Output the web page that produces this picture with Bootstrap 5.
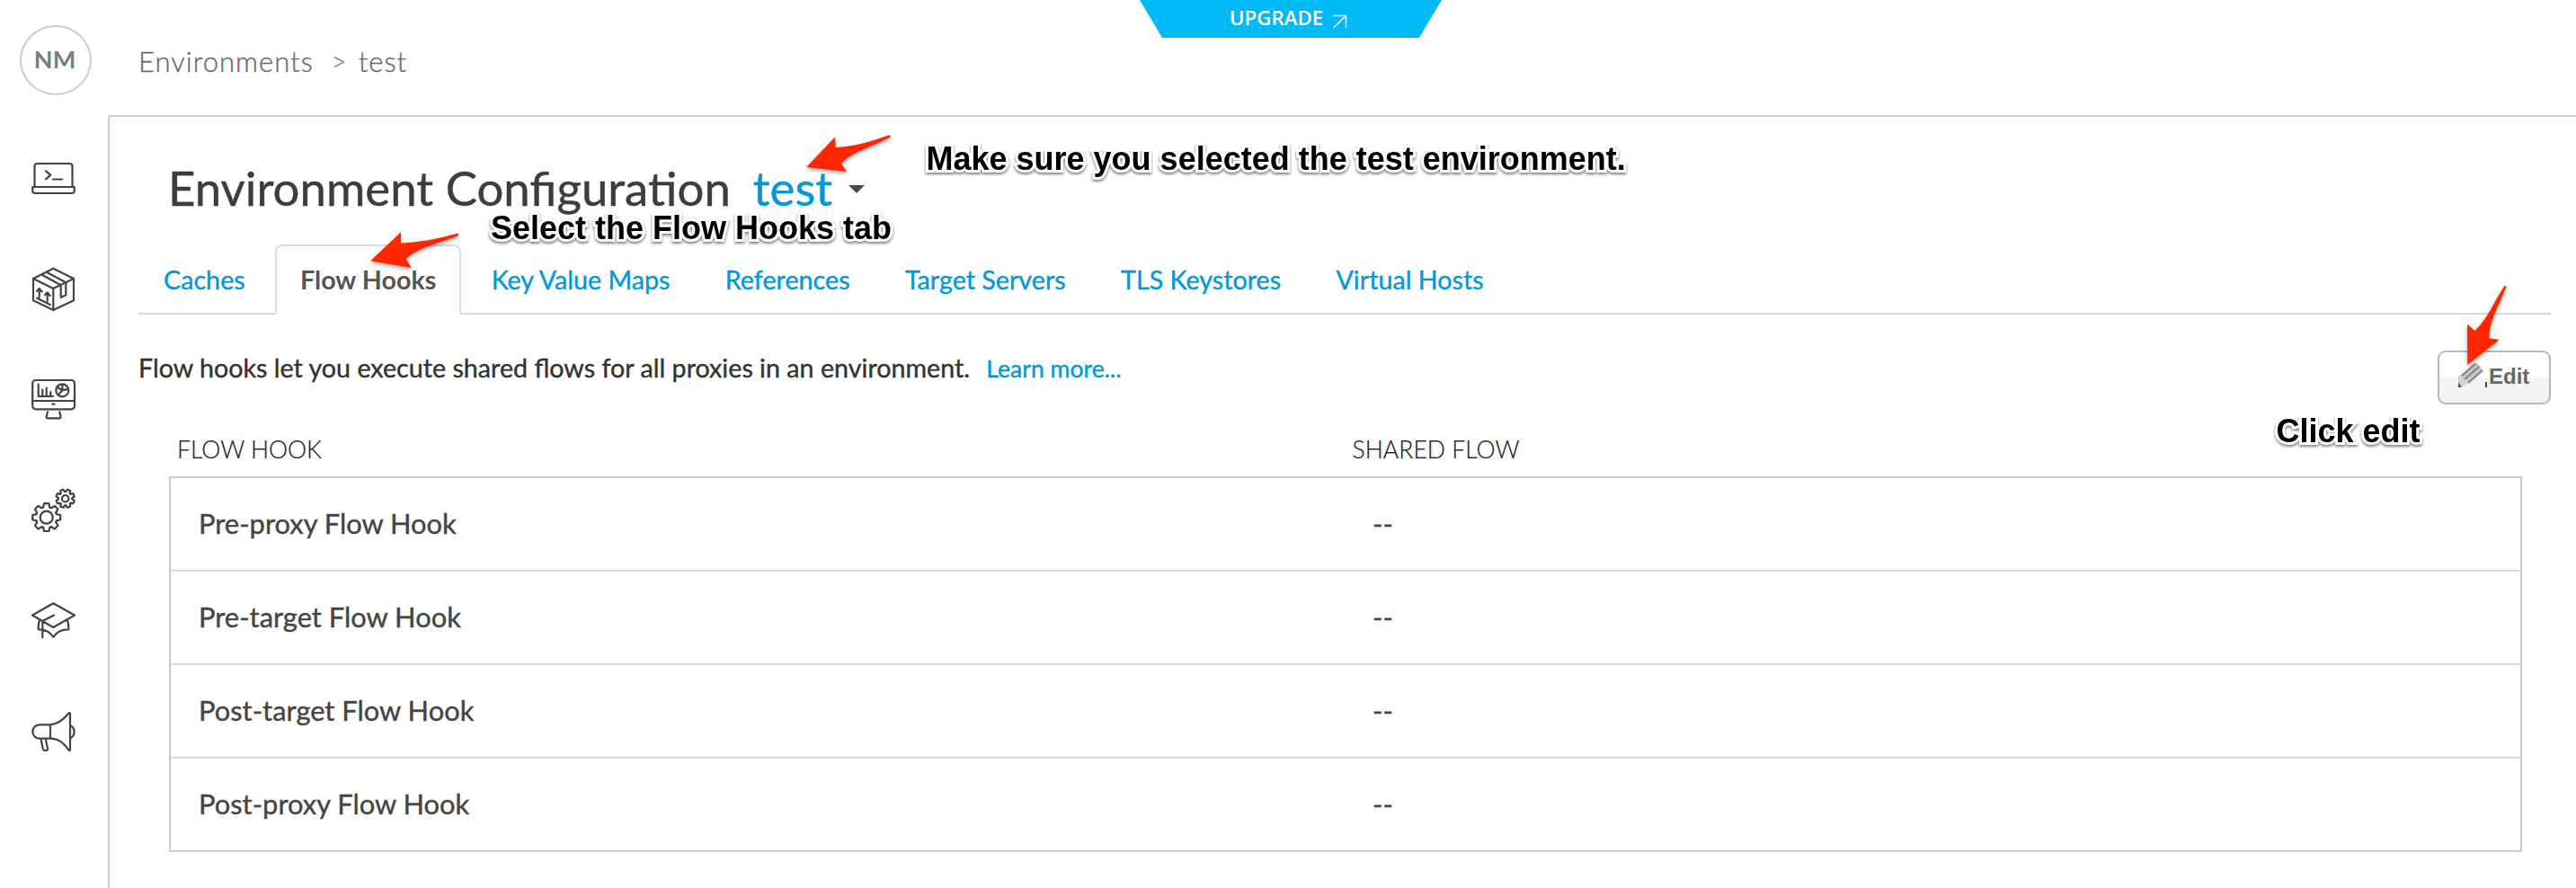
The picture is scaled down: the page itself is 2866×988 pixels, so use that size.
<!DOCTYPE html>
<html lang="en">
<head>
<meta charset="utf-8">
<title>Environment Configuration</title>
<link rel="stylesheet" href="https://cdn.jsdelivr.net/npm/bootstrap@5.3.0/dist/css/bootstrap.min.css">
<style>
body{font-family:Lato,"Liberation Sans",sans-serif;color:#333;background:#fff;width:2866px;height:988px}
a{color:#0199db;text-decoration:none}
.rail{width:120px}
.avatar{width:80px;height:78px;border:2px solid #ccc;border-radius:50%;margin:28px 0 0 22px;font-size:27px;color:#7b7d7d;padding-right:2px;padding-bottom:1px}
.rail-nav{margin-top:30px}
.rail-nav li{height:123px}
.rail svg{width:50px;height:50px;fill:none;stroke:#434444;stroke-width:2.2;stroke-linecap:round;stroke-linejoin:round}
.top{height:128px;padding:48px 0 0 34px;font-size:31px;line-height:40px;font-weight:300;letter-spacing:1px;color:#666868;-webkit-text-stroke:.3px}
.crumb-sep{font-size:29px;margin:0 12px 0 20px;color:#808282}
.pane{border:2px solid #ccc;border-right:0;border-bottom:0;border-top-left-radius:3px;padding:49px 28px 0 32px;-webkit-text-stroke:.4px}
.title{font-size:52.75px;line-height:60px;margin:0 0 33px 33px;font-weight:400;color:#3c3d3d;font-variant-ligatures:common-ligatures discretionary-ligatures}
.title a{margin-left:25px;font-variant-ligatures:none}
.caret{width:0;height:0;border:9px solid transparent;border-top-color:#4a4a4a;border-bottom:0;margin-left:18px;margin-top:2px}
.env-tabs{--bs-nav-tabs-border-width:2px;border-bottom:2px solid #dadada;font-size:28.7px;line-height:40px;gap:5.3px}
.env-tabs .nav-link{padding:17px 26px 17px;border:2px solid transparent;border-radius:8px 8px 0 0;color:#0199db;margin-bottom:-2px}
.env-tabs .nav-link.active{color:#555;font-weight:700;border-color:#dadada #dadada #fff;-webkit-text-stroke:0}
.intro{margin-top:40px;font-size:28.66px;line-height:38px}
.intro a{font-size:26.6px;margin-left:11px}
.edit{width:126px;height:60px;border:2px solid #b1bbbf;border-radius:9px;background:linear-gradient(#fff 50%,#f2f4f4 50%);font:bold 24px/50px "Liberation Sans",Arial,sans-serif;color:#666;padding:0 0 2px 20px;-webkit-text-stroke:0}
.edit:hover{color:#666}
.edit svg{margin-top:-2px}
.edit span{margin-left:2px}
.hooks{margin:35px 32px 0 34px}
.hooks-head{font-size:26.6px;line-height:30px;font-weight:300;padding-left:9px;margin-bottom:15px;color:#222;-webkit-text-stroke:.2px}
.hooks-head span:first-child{width:1307.5px}
.hooks-body{border:2px solid #ccc;border-bottom:0}
.hook{height:104px;border-bottom:2px solid #dadada;font-size:30.87px;padding:1px 0 0 31px;color:#444545}
.hook:last-child{border-bottom-color:#ccc}
.hook span:first-child{width:1306px}
.upgrade{left:1268px;top:0;width:336px;height:42px;background:#00b9f7;clip-path:polygon(0 0,100% 0,311px 100%,25px 100%);color:#fff;font:600 22.3px/40px "Open Sans",sans-serif;padding-left:100px}
.upgrade:hover{color:#fff}
.note{font:bold 36px/36px "Liberation Sans",Arial,sans-serif;color:#000;white-space:nowrap;paint-order:stroke fill;-webkit-text-stroke:6px #fff;filter:drop-shadow(0 2px 1.5px rgba(0,0,0,.5))}
.note-env{left:1030.5px;top:159px}
.note-tab{left:546px;top:235.5px}
.note-edit{left:2532.5px;top:462px}
.arrows{left:0;top:0;pointer-events:none;filter:drop-shadow(0 2px 2px rgba(0,0,0,.4))}
</style>
</head>
<body class="d-flex position-relative overflow-hidden">
<aside class="rail flex-shrink-0">
  <div class="avatar d-flex align-items-center justify-content-center fw-bold">NM</div>
  <ul class="rail-nav list-unstyled">
    <li class="d-flex align-items-center justify-content-center"><svg viewBox="0 0 50 50"><path d="M3.5 35V12a3 3 0 0 1 3-3h36a3 3 0 0 1 3 3v23M1.2 35h46.6v4a3 3 0 0 1-3 3H4.2a3 3 0 0 1-3-3zM16 17.3l5.3 4.4-5.3 4.6M24 26.5h10"/></svg></li>
    <li class="d-flex align-items-center justify-content-center"><svg viewBox="0 0 50 50"><path d="M24.3 2.7 47 14v24.3L24.3 49 2 38.3V14zM2 14l22.3 11L47 14M24.3 25v24M16.7 6.7l21.6 11.6v14l-5.6 2.6V21.3l-21-11.6M8.7 34.7V25M6 28l2.7-3 3 3.5M17.7 39v-9.7M15 32l2.7-2.7 3 3.7M6.3 35.7l14.4 7.3"/></svg></li>
    <li class="d-flex align-items-center justify-content-center"><svg viewBox="0 0 50 50"><rect x="1.2" y="4" width="46.8" height="32.3" rx="3.5"/><path d="M1.2 27H48M23.2 30.5h2.4M18 39.3 16.6 45q0 1.3 1.2 1.3h13.6q1.2 0 1.2-1.3l-1.3-5.7M7.7 8.7V22H24M12.3 14.5V22M16.7 12.7V22M21.3 17V22M34.3 15.3l-5.8-3.8M34.3 15.3l.2-6.5M34.3 15.3l6.6-1.4M34.3 15.3l-4.6 5.3"/><circle cx="34.3" cy="15.3" r="7"/></svg></li>
    <li class="d-flex align-items-center justify-content-center"><svg viewBox="0 0 50 50"><defs><path id="tooth" vector-effect="non-scaling-stroke" d="M-5.8-10.5Q-4-10.5-3.4-12L-2.6-15.5H2.6L3.4-12Q3.8-11 5-10.6"/><g id="gear"><use href="#tooth"/><use href="#tooth" transform="rotate(45)"/><use href="#tooth" transform="rotate(90)"/><use href="#tooth" transform="rotate(135)"/><use href="#tooth" transform="rotate(180)"/><use href="#tooth" transform="rotate(225)"/><use href="#tooth" transform="rotate(270)"/><use href="#tooth" transform="rotate(315)"/></g></defs><use href="#gear" transform="translate(16.7 33.7)"/><circle cx="16.7" cy="33.7" r="7"/><use href="#gear" transform="translate(37.7 12.7) rotate(22.5) scale(.66)"/><circle cx="37.7" cy="12.7" r="3.7"/></svg></li>
    <li class="d-flex align-items-center justify-content-center"><svg viewBox="0 0 50 50"><path d="M24.3 6.3 48 19.5 24.3 33 1 19.5zM25 19.5 12.3 26v18.3M9 25Q7.5 29 7.7 35.3Q19 35 24.3 43.8Q30 35 41.3 35.3Q41.5 29 39.8 25"/></svg></li>
    <li class="d-flex align-items-center justify-content-center"><svg viewBox="0 0 50 50"><path d="M21 18.3H9a7.7 7.7 0 0 0 0 15.4h12zC31 17.5 37 11 41 6q2-2 2 .5v39.5q0 2-1.7.3C35 37.5 30 34 21 33.7M43.3 19.2a8 8 0 0 1 0 14.2M10.5 34l2.3 11.5q.3 1.3 1.5 1.3h2.5q1.7 0 1.3-1.6L15.7 34"/></svg></li>
  </ul>
</aside>
<main class="flex-grow-1 d-flex flex-column">
  <header class="top d-flex"><span>Environments</span><span class="crumb-sep">&gt;</span><span>test</span></header>
  <section class="pane flex-grow-1">
    <h1 class="title d-flex align-items-center">Environment Configuration <a href="#">test</a><span class="caret"></span></h1>
    <ul class="nav nav-tabs env-tabs">
      <li class="nav-item"><a class="nav-link" href="#">Caches</a></li>
      <li class="nav-item"><a class="nav-link active" href="#">Flow Hooks</a></li>
      <li class="nav-item"><a class="nav-link" href="#">Key Value Maps</a></li>
      <li class="nav-item"><a class="nav-link" href="#">References</a></li>
      <li class="nav-item"><a class="nav-link" href="#">Target Servers</a></li>
      <li class="nav-item"><a class="nav-link" href="#">TLS Keystores</a></li>
      <li class="nav-item"><a class="nav-link" href="#">Virtual Hosts</a></li>
    </ul>
    <div class="intro d-flex justify-content-between align-items-start">
      <div>Flow hooks let you execute shared flows for all proxies in an environment. <a href="#">Learn more...</a></div>
      <button class="btn edit d-flex align-items-center" type="button"><svg width="33" height="30" viewBox="0 0 33 30"><path d="M1 16 4 13 11 23 7 27H1z" fill="#d4d4d4"/><path d="M1 22v6h4z" fill="#555"/><path d="M4 14 19 1q2-1 4 1l5 6q1 2-1 3L12 24z" fill="#c9c9c9"/><path d="M5 15 20 2M8 19 24 5M12 23 28 9" stroke="#858585" stroke-width="2.3"/><path d="M31 22h2v6h-2z" fill="#444"/></svg><span>Edit</span></button>
    </div>
    <div class="hooks">
      <div class="hooks-head d-flex"><span>FLOW HOOK</span><span>SHARED FLOW</span></div>
      <div class="hooks-body">
        <div class="hook d-flex align-items-center"><span>Pre-proxy Flow Hook</span><span>--</span></div>
        <div class="hook d-flex align-items-center"><span>Pre-target Flow Hook</span><span>--</span></div>
        <div class="hook d-flex align-items-center"><span>Post-target Flow Hook</span><span>--</span></div>
        <div class="hook d-flex align-items-center"><span>Post-proxy Flow Hook</span><span>--</span></div>
      </div>
    </div>
  </section>
</main>
<a href="#" class="upgrade position-absolute d-flex">UPGRADE<svg class="ms-2" width="20" height="42" viewBox="0 0 20 42" fill="none" stroke="#fff" stroke-width="1.5"><path d="M3.500 17.500H17.500V31M17.500 17.500 3.500 31"/></svg></a>
<!-- Tutorial callouts laid over the page -->
<div class="note note-env position-absolute">Make sure you selected the test environment.</div>
<div class="note note-tab position-absolute">Select the Flow Hooks tab</div>
<div class="note note-edit position-absolute">Click edit</div>
<svg class="arrows position-absolute" width="2866" height="988" fill="#ff2600">
  <path d="M897.3 186 928.7 152.7 929.7 164C950 163.5 970 157 989.5 150.3L991 152.5C968 164 948 169 935.7 181.7L942.3 191z"/>
  <path d="M412.3 290.3 446 258.3V270.5C466 270 490 265 509.5 259.5L510.3 262C488 271 466 275 451.7 287.7L457.7 298z"/>
  <path d="M2745.3 405.7 2745 360.7 2753.3 368C2767 356 2774 337 2786.7 317.7L2788.7 318.7C2780 340 2769 358 2769.3 376.3L2780.7 378z"/>
</svg>
<script src="https://cdn.jsdelivr.net/npm/bootstrap@5.3.0/dist/js/bootstrap.bundle.min.js"></script>
</body>
</html>
